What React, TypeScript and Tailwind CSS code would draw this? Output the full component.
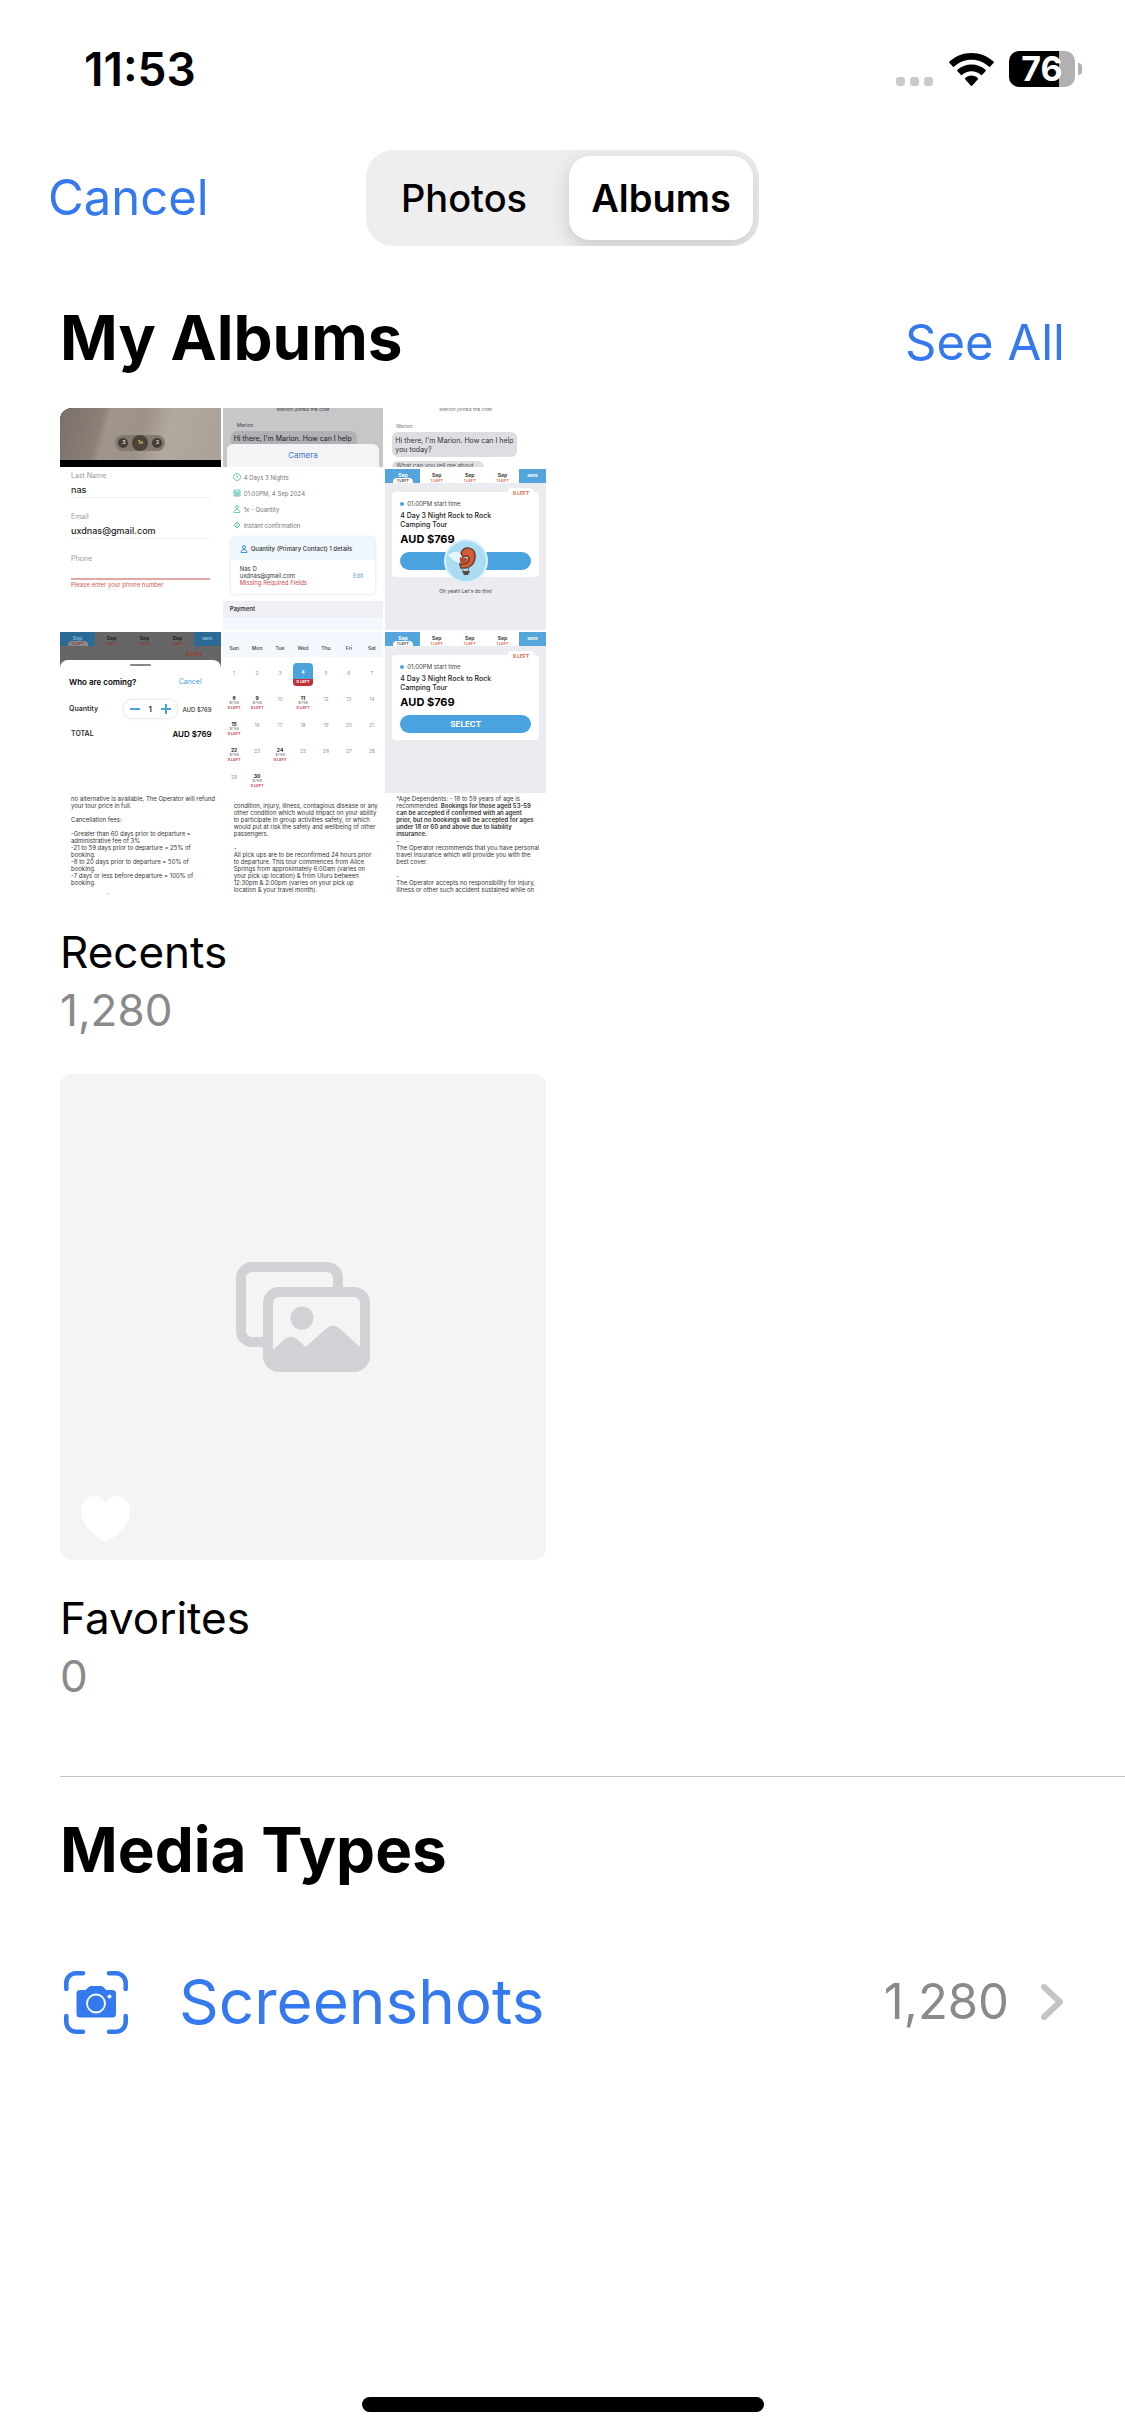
import type { ReactNode } from "react";

function WifiIcon() {
  return (
    <svg viewBox="0 0 45 33" className="h-[33px] w-[45px]" aria-hidden="true">
      <path d="M22.5 0C31 0 38.700 3.200 44.500 8.600a1 1 0 0 1 0 1.500l-3.300 3.400a1 1 0 0 1-1.500 0C35.200 9.300 29.200 6.800 22.500 6.800S9.800 9.300 5.300 13.500a1 1 0 0 1-1.500 0L.5 10.100a1 1 0 0 1 0-1.500C6.300 3.200 14 0 22.500 0Z" />
      <path d="M22.500 11.400c5.400 0 10.300 2 14 5.400a1 1 0 0 1 0 1.500l-3.300 3.400a1 1 0 0 1-1.500 0c-2.400-2.200-5.600-3.500-9.200-3.500s-6.800 1.300-9.200 3.500a1 1 0 0 1-1.500 0l-3.300-3.400a1 1 0 0 1 0-1.500c3.700-3.400 8.600-5.400 14-5.400Z" />
      <path d="M22.500 22.600c2.400 0 4.600.9 6.200 2.300a1 1 0 0 1 0 1.500l-5.400 6.200a1.100 1.100 0 0 1-1.600 0l-5.400-6.200a1 1 0 0 1 0-1.500c1.600-1.400 3.800-2.300 6.200-2.300Z" />
    </svg>
  );
}

function StackedPhotosIcon() {
  return (
    <svg viewBox="0 0 134 110" className="h-[110px] w-[134px]" aria-hidden="true">
      <rect x="5" y="5" width="97" height="75" rx="11" fill="none" stroke="#d1d1d6" strokeWidth="10" />
      <rect x="27" y="25" width="107" height="85" rx="16" fill="#d1d1d6" />
      <path
        d="M37 88V41a6 6 0 0 1 6-6h75a6 6 0 0 1 6 6v44L103 66q-6-5-12 0L69.500 85 61 77q-6-5-12 0Z"
        fill="#f4f4f5"
      />
      <circle cx="66" cy="56" r="11.500" fill="#d1d1d6" />
    </svg>
  );
}

function HeartIcon() {
  return (
    <svg viewBox="0 0 49 46" className="h-[46px] w-[49px]" fill="white" aria-hidden="true">
      <path d="M24.500 46C23 46 0 33 0 16 0 6.500 6 0 13.500 0c5 0 9 3 11 7.500C26.500 3 30.500 0 35.500 0 43 0 49 6.500 49 16c0 17-23 30-24.500 30Z" />
    </svg>
  );
}

function ScreenshotIcon() {
  return (
    <svg viewBox="0 0 64 63" className="h-[63px] w-16 shrink-0" fill="none" stroke="#3579ef" strokeWidth="4.500" strokeLinecap="round" aria-hidden="true">
      <path d="M2.300 18v-6A9.700 9.700 0 0 1 12 2.300h7M45 2.300h7a9.700 9.700 0 0 1 9.700 9.700v6M61.700 45v6a9.700 9.700 0 0 1-9.700 9.700h-7M19 60.700h-7A9.700 9.700 0 0 1 2.300 51v-6" />
      <path
        d="M16 19h5c2 0 3-4 6-4h10c3 0 4 4 6 4h5.500a3.500 3.500 0 0 1 3.500 3.500V43a3.500 3.500 0 0 1-3.500 3.500H16a3.500 3.500 0 0 1-3.500-3.500V22.500A3.500 3.500 0 0 1 16 19Z"
        fill="#3579ef"
        stroke="none"
      />
      <circle cx="32" cy="32.500" r="9" stroke="white" strokeWidth="1.800" />
      <circle cx="45.500" cy="25.500" r="2" fill="white" stroke="none" />
    </svg>
  );
}

function StatusBar() {
  return (
    <header className="flex h-[150px] items-center justify-between pb-3 pl-[84px] pr-[43px]">
      <time className="text-[46px] font-semibold leading-[54px]">11:53</time>
      <div className="flex items-center">
        <div className="flex gap-[5px] pt-6">
          <i className="size-[9px] rounded-[3px] bg-[#cacaca]" />
          <i className="size-[9px] rounded-[3px] bg-[#cacaca]" />
          <i className="size-[9px] rounded-[3px] bg-[#cacaca]" />
        </div>
        <div className="ml-4 mr-[15px]">
          <WifiIcon />
        </div>
        <div className="flex h-9 w-[66px] items-center justify-center rounded-[10px] bg-[linear-gradient(90deg,#000_76%,#b1b1b1_76%)] text-[34px] font-bold leading-9 text-white">
          76
        </div>
        <i className="ml-[3px] h-3 w-1 rounded-r-full bg-[#b1b1b1]" />
      </div>
    </header>
  );
}

function CameraCell() {
  return (
    <div className="flex h-[59px] flex-col bg-black">
      <div className="flex h-[52px] items-end justify-center bg-[linear-gradient(105deg,#7b7069_0%,#8a8078_25%,#a0968d_30%,#9c9289_50%,#b1a89f_65%,#aaa198_100%)] pb-[9px]">
        <div className="flex h-4 items-center gap-1 rounded-full bg-[#82796f] px-[3px] text-[5px] font-bold text-[#d9d4ce]">
          <span className="flex size-[10px] items-center justify-center rounded-full bg-[#443d37]">.5</span>
          <span className="flex size-4 items-center justify-center rounded-full bg-[#4b433a] text-[#d7c65e]">1x</span>
          <span className="flex size-[10px] items-center justify-center rounded-full bg-[#443d37]">3</span>
        </div>
      </div>
    </div>
  );
}

function ContactFormCell() {
  return (
    <div className="h-[161px] bg-white px-[11px] pt-[2px] text-[7px] text-[#9a9a9a]">
      <p className="leading-[10px]">Last Name</p>
      <p className="mt-1 h-[13px] border-b border-[#efefef] text-[9px] font-medium leading-[10px] text-[#222]">nas</p>
      <p className="mt-[14px] leading-[10px]">Email</p>
      <p className="mt-1 h-[13px] border-b border-[#efefef] text-[9px] font-medium leading-[10px] text-[#222]">uxdnas@gmail.com</p>
      <p className="mt-[15px] h-[26px] border-b-2 border-[#e3a5a5] leading-[10px]">Phone</p>
      <p className="mt-px text-[6px] leading-[7px] text-[#cf5a52]">Please enter your phone number</p>
    </div>
  );
}

function DateTabs({ dim = false }: { dim?: boolean }) {
  return (
    <div className={dim ? "flex h-[14px] bg-[#666] text-[5px] font-bold leading-[6px] text-[#222]" : "flex h-[14px] bg-white text-[5px] font-bold leading-[6px] text-[#444]"}>
      <div className={dim ? "flex w-[35px] flex-col items-center bg-[#2c6b95] pt-[3px] text-[#7fb0d0]" : "flex w-[35px] flex-col items-center bg-[#55a5dc] pt-[3px] text-white"}>
        Sep
        <span className={dim ? "h-[5px] w-5 rounded-t-sm bg-[#8a8a8a] text-center text-[4px] leading-[5px] text-[#844]" : "h-[5px] w-5 rounded-t-sm bg-white text-center text-[4px] leading-[5px] text-[#555]"}>
          1 LEFT
        </span>
      </div>
      {[0, 1, 2].map((n) => (
        <div key={n} className="flex flex-1 flex-col items-center pt-[3px]">
          Sep
          <span className={dim ? "text-[4px] leading-[5px] text-[#8d3a30]" : "text-[4px] leading-[5px] text-[#e0704f]"}>1 LEFT</span>
        </div>
      ))}
      <div className={dim ? "w-[27px] bg-[#2c6b95] pt-1 text-center text-[4px] text-[#8fbad4]" : "w-[27px] bg-[#55a5dc] pt-1 text-center text-[4px] text-white"}>
        More
      </div>
    </div>
  );
}

function QuantityCell() {
  return (
    <div className="flex h-[161px] flex-col bg-[#666]">
      <DateTabs dim />
      <p className="h-[14px] pr-[18px] pt-1 text-right text-[5px] font-bold leading-[8px] text-[#a3382c]">9 LEFT</p>
      <div className="flex-1 rounded-t-lg bg-white px-[9px] pt-1 text-[7px] text-[#333]">
        <div className="mx-auto h-[2px] w-[21px] rounded-full bg-[#888]" />
        <div className="mt-[10px] flex items-center justify-between pr-[10px]">
          <p className="text-[8px] font-semibold leading-[12px] text-black">Who are coming?</p>
          <p className="leading-[12px] text-[#4aa3d9]">Cancel</p>
        </div>
        <div className="mt-3 flex items-center justify-between">
          <p className="w-[49px] font-semibold">Quantity</p>
          <div className="flex h-[18px] w-[53px] items-center justify-between rounded-lg px-[6px] text-[8px] font-semibold shadow-[0_0_3px_#ccc]">
            <i className="h-[2px] w-[10px] bg-[#4aa3d9]" />
            <span>1</span>
            <svg viewBox="0 0 10 10" className="size-[10px]" stroke="#4aa3d9" strokeWidth="2" aria-hidden="true">
              <path d="M5 0v10M0 5h10" />
            </svg>
          </div>
          <p className="text-[6px] font-medium">AUD $769</p>
        </div>
        <div className="mt-[10px] flex items-center justify-between pl-[2px] font-semibold">
          <p>TOTAL</p>
          <p className="text-[8px] leading-[12px] text-black">AUD $769</p>
        </div>
      </div>
    </div>
  );
}

function ChatCameraCell() {
  return (
    <div className="flex h-[59px] flex-col overflow-hidden bg-[#c7c7c9] px-1 text-[#444]">
      <p className="h-[14px] text-center text-[5px] leading-[3px]">Marion joined the chat</p>
      <p className="h-[10px] pl-[10px] text-[5px] leading-[8px]">Marion</p>
      <div className="ml-1 h-[13px] w-[126px] whitespace-nowrap rounded-t-md bg-[#b1b1b5] pl-[3px] text-[7px] leading-[15px] text-[#222]">
        Hi there, I'm Marion. How can I help
      </div>
      <p className="flex-1 rounded-t-md bg-[#f4f4f6] text-center text-[8px] leading-[23px] text-[#3d74c9]">Camera</p>
    </div>
  );
}

function PersonMark() {
  return (
    <svg viewBox="0 0 8 8" className="size-2" fill="none" stroke="currentColor" strokeWidth="1" aria-hidden="true">
      <circle cx="4" cy="2" r="1.500" />
      <path d="M1 7.500c0-4 6-4 6 0Z" />
    </svg>
  );
}

function BookingCell() {
  return (
    <div className="flex h-[161px] flex-col bg-white text-[6px] text-[#777]">
      <ul className="pl-[10px]">
        {["4 Days 3 Nights", "01:00PM, 4 Sep 2024", "1x - Quantity", "Instant confirmation"].map((t, i) => (
          <li key={t} className="flex h-4 items-center gap-[3px] text-[#777]">
            <span className="text-[#71c9b5]">
              {i === 2 ? (
                <PersonMark />
              ) : (
                <svg viewBox="0 0 8 8" className="size-2" fill="none" stroke="currentColor" strokeWidth="1" aria-hidden="true">
                  {i === 0 && <path d="M4 2v2l1 1M7.500 4A3.500 3.500 0 1 1 4 .5 3.500 3.500 0 0 1 7.500 4Z" />}
                  {i === 1 && <path d="M1 1h6v6H1ZM1 3h6M3 3v4M5 3v4M1 5h6" />}
                  {i === 3 && <path d="M4 1 7 4 4 7 1 4ZM4 2v4" />}
                </svg>
              )}
            </span>
            {t}
          </li>
        ))}
      </ul>
      <div className="mx-2 mt-1 h-[57px] overflow-hidden rounded bg-white shadow-[0_0_3px_#cfdbe4]">
        <div className="flex h-[23px] items-center gap-[3px] whitespace-nowrap bg-[#eff7fd] pl-[9px] font-medium text-[#333]">
          <span className="text-[#3d93d0]"><PersonMark /></span>
          Quantity (Primary Contact) 1 details
        </div>
        <div className="flex items-center justify-between pl-[9px] pr-3 pt-[5px] leading-[7px] text-[#333]">
          <div>
            <p>Nas D</p>
            <p>uxdnas@gmail.com</p>
            <p className="text-[#d14a48]">Missing Required Fields</p>
          </div>
          <p className="text-[#62a9d8]">Edit</p>
        </div>
      </div>
      <p className="mt-[7px] h-4 bg-[#f0f0f4] pl-[7px] font-semibold leading-4 text-[#333]">Payment</p>
      <div className="flex-1 bg-[#f2f8fd]" />
    </div>
  );
}

const openDays = [8, 9, 11, 15, 22, 24, 30];

function CalendarCell() {
  return (
    <div className="h-[161px] bg-white text-center text-[5px] leading-[6px] text-[#999]">
      <div className="grid h-[25px] grid-cols-7 items-center bg-[#f2f8fd] pt-[6px] font-semibold text-[#555]">
        {["Sun", "Mon", "Tue", "Wed", "Thu", "Fri", "Sat"].map((d) => (
          <span key={d}>{d}</span>
        ))}
      </div>
      <div className="grid auto-rows-[26px] grid-cols-7 pt-[6px]">
        {Array.from({ length: 30 }, (_, i) => i + 1).map((d) =>
          d === 4 ? (
            <div key={d} className="mx-px flex h-[23px] flex-col overflow-hidden rounded-sm bg-[#4aa3df] font-bold text-white">
              <span className="flex-1 pt-[6px]">4</span>
              <span className="h-[7px] bg-[#c1313c] text-[4px]">9 LEFT</span>
            </div>
          ) : openDays.includes(d) ? (
            <div key={d} className="flex flex-col items-center pt-[6px] font-bold text-[#222]">
              {d}
              <span className="text-[4px] font-normal leading-[4px] text-[#666]">$769</span>
              <span className="text-[4px] leading-[5px] text-[#d0515c]">9 LEFT</span>
            </div>
          ) : (
            <span key={d} className="pt-[7px]">{d}</span>
          ),
        )}
      </div>
    </div>
  );
}

function ChatCell() {
  return (
    <div className="flex h-[59px] flex-col overflow-hidden bg-white px-[7px] text-[#777]">
      <p className="h-[14px] text-center text-[5px] leading-[3px]">Marion joined the chat</p>
      <p className="h-[10px] pl-1 text-[5px] leading-[8px]">Marion</p>
      <p className="h-[25px] w-[125px] whitespace-nowrap rounded-md bg-[#dddde2] pl-[3px] pt-1 text-[7px] leading-[9px] text-[#333]">
        Hi there, I'm Marion. How can I help
        <br />
        you today?
      </p>
      <p className="mt-1 h-[6px] w-[92px] whitespace-nowrap rounded-t-md bg-[#dddde2] pl-1 text-[6px] leading-[9px] text-[#555]">What can you tell me about</p>
    </div>
  );
}

function TourCell({ loading = false }: { loading?: boolean }) {
  return (
    <div className="flex h-[161px] flex-col bg-[#ebebf0]">
      <DateTabs />
      <div className="relative mx-[7px] mt-[9px] h-[85px] rounded bg-white px-2 pt-[8px]">
        <span className="absolute -top-1 right-[5px] h-[11px] w-[26px] rounded-sm bg-white text-center text-[5px] font-bold leading-[11px] text-[#d96a48]">9 LEFT</span>
        <p className="flex items-center gap-[3px] text-[6px] leading-[8px] text-[#444]">
          <i className="size-1 rounded-full bg-[#4aa3df]" />
          01:00PM start time
        </p>
        <p className="mt-[3px] text-[7px] font-medium leading-[9px] text-[#222]">
          4 Day 3 Night Rock to Rock
          <br />
          Camping Tour
        </p>
        <p className="mt-1 text-[11px] font-bold leading-[13px] text-black">AUD $769</p>
        <div className="mt-[6px] flex h-[18px] items-center justify-center rounded-full bg-[#4aa3df] text-[8px] font-bold text-white">
          {loading ? (
            <svg viewBox="0 0 44 44" className="size-11 shrink-0" aria-hidden="true">
              <circle cx="22" cy="22" r="21" fill="#a9dcf3" stroke="#d9f1fa" strokeWidth="2" />
              <path d="M4 16Q12 10 20 15L15 24Q9 22 4 16Z" fill="#e6f6fc" />
              <path d="M17 14C20 6 31 8 31 17c0 7-4 12-11 12h-3l-1-4c5 1 9-1 9-5 0-3-3-4-6-2Z" fill="#d95b35" stroke="#6a3a2b" strokeWidth="1.500" />
              <path d="M16 18q-1 5 2 7 5 0 6-4-1-3-5-2Z" fill="#b94a2e" />
              <path d="M18 32h8l-2 4h-4Z" fill="#59493f" />
              <path d="m18 28 1 4M25 27l-1 5" stroke="#8a6a58" />
            </svg>
          ) : (
            "SELECT"
          )}
        </div>
      </div>
      {loading && <p className="mt-[10px] text-center text-[5px] leading-[8px] text-[#444]">Oh yeah! Let's do this!</p>}
    </div>
  );
}

function DocumentText({ children }: { children: ReactNode }) {
  return (
    <div className="flex flex-1 flex-col justify-center overflow-hidden whitespace-pre bg-white pl-[11px] text-[6px] leading-[7px] text-[#333]">
      <p>{children}</p>
    </div>
  );
}

const cancellation = `no alternative is available, The Operator will refund
your tour price in full.

Cancellation fees:

-Greater than 60 days prior to departure =
administrative fee of 3%
-21 to 59 days prior to departure = 25% of
booking.
-8 to 20 days prior to departure = 50% of
booking.
-7 days or less before departure = 100% of
booking.

Amendment fees:`;

const safety = `condition, injury, illness, contagious disease or any
other condition which would impact on your ability
to participate in group activities safety, or which
would put at risk the safety and wellbeing of other
passengers.

-
All pick ups are to be reconfirmed 24 hours prior
to departure. This tour commences from Alice
Springs from approximately 6:00am (varies on
your pick up location) & from Uluru between
12:30pm & 2:00pm (varies on your pick up
location & your travel month).
`;

function RecentsCollage() {
  return (
    <div aria-hidden="true" className="grid aspect-square grid-cols-3 gap-x-[2px] overflow-hidden rounded-xl">
      <div className="flex min-w-0 flex-col gap-[2px]">
        <CameraCell />
        <ContactFormCell />
        <QuantityCell />
        <DocumentText>{cancellation}</DocumentText>
      </div>
      <div className="flex min-w-0 flex-col gap-[2px]">
        <ChatCameraCell />
        <BookingCell />
        <CalendarCell />
        <DocumentText>{safety}</DocumentText>
      </div>
      <div className="flex min-w-0 flex-col gap-[2px]">
        <ChatCell />
        <TourCell loading />
        <TourCell />
        <DocumentText>
          {"*Age Dependents: - 18 to 59 years of age is\nrecommended. "}
          <b className="font-semibold">
            {"Bookings for those aged 53-59\ncan be accepted if confirmed with an agent\nprior, but no bookings will be accepted for ages\nunder 18 or 60 and above due to liability\ninsurance."}
          </b>
          {"\n-\nThe Operator recommends that you have personal\ntravel insurance which will provide you with the\nbest cover.\n\n-\nThe Operator accepts no responsibility for injury,\nillness or other such accident sustained while on\ntour nor do they accept any liability for lost or"}
        </DocumentText>
      </div>
    </div>
  );
}

function Album({ name, count, children }: { name: string; count: string; children: ReactNode }) {
  return (
    <button type="button" className="col-start-1 block text-left">
      {children}
      <span className="mt-[29px] block text-[44px] leading-[58px]">{name}</span>
      <span className="block text-[44px] leading-[58px] text-[#8a8a8c]">{count}</span>
    </button>
  );
}

export default function App() {
  return (
    <div className="flex min-h-screen flex-col bg-white font-['Inter',sans-serif] text-black">
      <StatusBar />
      <nav className="grid grid-cols-[1fr_auto_1fr] items-center px-12">
        <button type="button" className="justify-self-start text-[49px] leading-[60px] text-[#3579ef]">Cancel</button>
        <div className="grid h-24 w-[393px] grid-cols-2 gap-[13px] overflow-hidden rounded-[27px] bg-[#eeeeee] p-[6px] text-[38px]">
          <button type="button" aria-pressed="false" className="font-medium">Photos</button>
          <button type="button" aria-pressed="true" className="rounded-[21px] bg-white font-semibold shadow-[0_6px_20px_rgba(0,0,0,0.16)]">Albums</button>
        </div>
      </nav>
      <main>
        <section className="px-[60px]">
          <div className="mb-[31px] mt-[53px] flex items-baseline justify-between">
            <h2 className="text-[62px] font-bold leading-[78px]">My Albums</h2>
            <button type="button" className="text-[49px] leading-[60px] text-[#3579ef]">See All</button>
          </div>
          <div className="grid grid-cols-2 gap-x-[33px] gap-y-[35px]">
            <Album name="Recents" count="1,280">
              <RecentsCollage />
            </Album>
            <Album name="Favorites" count="0">
              <div className="relative flex aspect-square items-center justify-center rounded-xl bg-[#f4f4f5]">
                <StackedPhotosIcon />
                <div className="absolute bottom-[18px] left-[21px]">
                  <HeartIcon />
                </div>
              </div>
            </Album>
          </div>
        </section>
        <section className="ml-[60px] mt-[71px] border-t border-[#c6c6c8] pr-[60px] pt-[34px]">
          <h2 className="text-[62px] font-bold leading-[78px]">Media Types</h2>
          <a href="#screenshots" className="mt-[74px] flex items-center pl-1">
            <ScreenshotIcon />
            <span className="ml-[51px] text-[62px] leading-[78px] text-[#3579ef]">Screenshots</span>
            <span className="ml-auto text-[49px] leading-[60px] text-[#8a8a8c]">1,280</span>
            <svg viewBox="0 0 22 36" className="ml-8 mr-[2px] h-9 w-[22px]" fill="none" stroke="#c4c4c6" strokeWidth="6" strokeLinecap="round" strokeLinejoin="round" aria-hidden="true">
              <path d="m3 3 16 15L3 33" />
            </svg>
          </a>
        </section>
      </main>
      <div className="mx-auto mb-6 mt-auto h-[15px] w-[402px] rounded-full bg-black" />
    </div>
  );
}
